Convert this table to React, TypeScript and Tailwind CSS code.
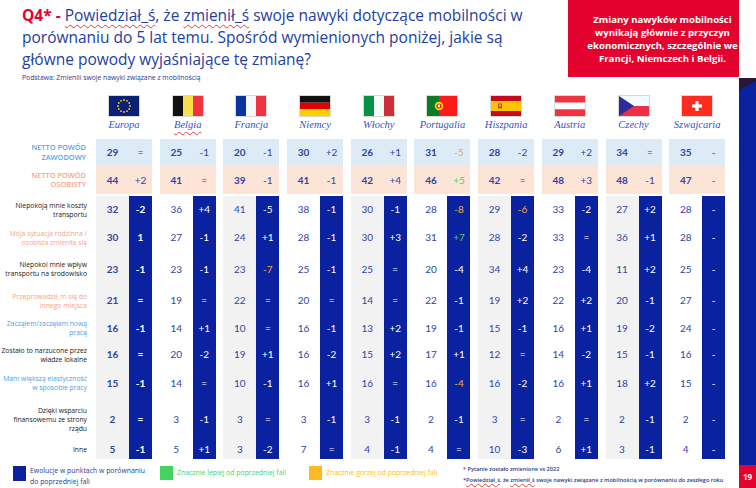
import React from "react";

type Cell = [string, string, ("o" | "g")?];

interface RowDef {
  label: string;
  labelCls: string;
  h: string;
  cells: Cell[];
}

const valueCls = "text-[#2e44a8]";
const deltaColor = { o: "text-[#f2a93b]", g: "text-[#4fd060]" };

function EuFlag() {
  const stars = Array.from({ length: 12 }, (_, i) => {
    const a = (i * Math.PI) / 6;
    return <circle key={i} cx={15 + 6 * Math.cos(a)} cy={10 + 6 * Math.sin(a)} r={0.9} fill="#ffcc00" />;
  });
  return (
    <svg width="30" height="20" viewBox="0 0 30 20">
      <rect width="30" height="20" fill="#0a1f78" />
      {stars}
    </svg>
  );
}

function Tri({ a, b, c, vertical = true }: { a: string; b: string; c: string; vertical?: boolean }) {
  return (
    <svg width="30" height="20" viewBox="0 0 30 20">
      {vertical ? (
        <>
          <rect x="0" width="10" height="20" fill={a} />
          <rect x="10" width="10" height="20" fill={b} />
          <rect x="20" width="10" height="20" fill={c} />
        </>
      ) : (
        <>
          <rect y="0" width="30" height="6.7" fill={a} />
          <rect y="6.7" width="30" height="6.6" fill={b} />
          <rect y="13.3" width="30" height="6.7" fill={c} />
        </>
      )}
    </svg>
  );
}

function PtFlag() {
  return (
    <svg width="30" height="20" viewBox="0 0 30 20">
      <rect width="30" height="20" fill="#ff1a1a" />
      <rect width="12" height="20" fill="#0b7a2a" />
      <circle cx="12" cy="10" r="4.2" fill="#ffe000" />
      <circle cx="12" cy="10" r="2.6" fill="#ff2020" />
      <rect x="11" y="8.6" width="2" height="2.6" fill="#fff" />
    </svg>
  );
}

function EsFlag() {
  return (
    <svg width="30" height="20" viewBox="0 0 30 20">
      <rect width="30" height="20" fill="#c60b1e" />
      <rect y="5" width="30" height="10" fill="#ffc400" />
      <rect x="7" y="7.5" width="4" height="5" fill="#c8463a" />
      <rect x="8" y="8.5" width="2" height="2" fill="#e8b020" />
    </svg>
  );
}

function CzFlag() {
  return (
    <svg width="30" height="20" viewBox="0 0 30 20">
      <rect width="30" height="10" fill="#f2fbff" />
      <rect y="10" width="30" height="10" fill="#ee2e45" />
      <polygon points="0,0 15,10 0,20" fill="#2e2a9a" />
    </svg>
  );
}

function ChFlag() {
  return (
    <svg width="30" height="20" viewBox="0 0 30 20">
      <rect width="30" height="20" fill="#ff2b1f" />
      <rect x="13.4" y="5" width="3.2" height="10" fill="#fff" />
      <rect x="10" y="8.4" width="10" height="3.2" fill="#fff" />
    </svg>
  );
}

const countries: { name: string; flag: React.ReactNode; wavy?: boolean }[] = [
  { name: "Europa", flag: <EuFlag /> },
  { name: "Belgia", flag: <Tri a="#111" b="#f9e04a" c="#ef3340" />, wavy: true },
  { name: "Francja", flag: <Tri a="#0a34a0" b="#f4f8ff" c="#ef3344" /> },
  { name: "Niemcy", flag: <Tri a="#111" b="#e00000" c="#ffce00" vertical={false} /> },
  { name: "Włochy", flag: <Tri a="#069247" b="#f4fff8" c="#cd2e3a" /> },
  { name: "Portugalia", flag: <PtFlag /> },
  { name: "Hiszpania", flag: <EsFlag /> },
  { name: "Austria", flag: <Tri a="#ef3340" b="#fff" c="#ef3340" vertical={false} /> },
  { name: "Czechy", flag: <CzFlag /> },
  { name: "Szwajcaria", flag: <ChFlag /> },
];

const netto: { label: string; labelCls: string; bg: string; cells: Cell[] }[] = [
  {
    label: "NETTO POWÓD\nZAWODOWY",
    labelCls: "text-[#5aa2e8]",
    bg: "bg-[#ddebf7]",
    cells: [["29", "="], ["25", "-1"], ["20", "-1"], ["30", "+2"], ["26", "+1"], ["31", "-5", "o"], ["28", "-2"], ["29", "+2"], ["34", "="], ["35", "-"]],
  },
  {
    label: "NETTO POWÓD\nOSOBISTY",
    labelCls: "text-[#f6a57f]",
    bg: "bg-[#fce4d6]",
    cells: [["44", "+2"], ["41", "="], ["39", "-1"], ["41", "-1"], ["42", "+4"], ["46", "+5", "g"], ["42", "="], ["48", "+3"], ["48", "-1"], ["47", "-"]],
  },
];

const black = "text-[#1a1a1a]";
const peach = "text-[#f6a57f]";
const sky = "text-[#4d9fe6]";

const rows: RowDef[] = [
  { label: "Niepokoją mnie koszty\ntransportu", labelCls: black, h: "h-[27px]",
    cells: [["32", "-2"], ["36", "+4"], ["41", "-5"], ["38", "-1"], ["30", "-1"], ["28", "-8", "o"], ["29", "-6", "o"], ["33", "-2"], ["27", "+2"], ["28", "-"]] },
  { label: "Moja sytuacja rodzinna /\nosobista zmieniła się", labelCls: peach, h: "h-[29px]",
    cells: [["30", "1"], ["27", "-1"], ["24", "+1"], ["28", "-1"], ["30", "+3"], ["31", "+7", "g"], ["28", "-2"], ["33", "="], ["36", "+1"], ["28", "-"]] },
  { label: "Niepokoi mnie wpływ\ntransportu na środowisko", labelCls: black, h: "h-[34px]",
    cells: [["23", "-1"], ["23", "-1"], ["23", "-7", "o"], ["25", "-1"], ["25", "="], ["20", "-4"], ["34", "+4"], ["23", "-4"], ["11", "+2"], ["25", "-"]] },
  { label: "Przeprowadził_m się do\ninnego miejsca", labelCls: peach, h: "h-[29px]",
    cells: [["21", "="], ["19", "="], ["22", "="], ["20", "="], ["14", "="], ["22", "-1"], ["19", "+2"], ["22", "+2"], ["20", "-1"], ["27", "-"]] },
  { label: "Zacząłem/zaczęłam nową\npracę", labelCls: sky, h: "h-[26px]",
    cells: [["16", "-1"], ["14", "+1"], ["10", "="], ["16", "-1"], ["13", "+2"], ["19", "-1"], ["15", "-1"], ["16", "+1"], ["19", "-2"], ["24", "-"]] },
  { label: "Zostało to narzucone przez\nwładze lokalne", labelCls: black, h: "h-[27px]",
    cells: [["16", "="], ["20", "-2"], ["19", "+1"], ["16", "-2"], ["15", "+2"], ["17", "+1"], ["12", "="], ["14", "-2"], ["15", "-1"], ["16", "-"]] },
  { label: "Mam większą elastyczność\nw sposobie pracy", labelCls: sky, h: "h-[30px]",
    cells: [["15", "-1"], ["14", "="], ["10", "-1"], ["16", "+1"], ["16", "="], ["16", "-4", "o"], ["16", "-2"], ["16", "+1"], ["18", "+2"], ["15", "-"]] },
  { label: "Dzięki wsparciu\nfinansowemu ze strony\nrządu", labelCls: black, h: "h-[42px]",
    cells: [["2", "="], ["3", "-1"], ["3", "="], ["3", "-1"], ["3", "-1"], ["2", "-1"], ["3", "="], ["2", "="], ["2", "-1"], ["2", "-"]] },
  { label: "Inne", labelCls: black, h: "h-[19px]",
    cells: [["5", "-1"], ["5", "+1"], ["3", "-2"], ["7", "="], ["4", "-1"], ["4", "="], ["10", "-3"], ["6", "+1"], ["3", "-1"], ["4", "-"]] },
];

const wavy = "underline decoration-wavy decoration-[#e0403a] decoration-1 underline-offset-[3px]";
const wavySmall = "underline decoration-wavy decoration-[#e0403a] decoration-[0.5px] underline-offset-[1px]";

export default function App() {
  return (
    <div className="flex h-[488px] w-[756px] overflow-hidden bg-white font-['Open_Sans',sans-serif]">
      <div className="flex w-[739px] flex-col">
        {/* header */}
        <div className="flex h-[86px]">
          <div className="flex-1 pl-[22px] pt-[4px]">
            <p className="text-[15.5px] leading-[22px] text-[#2340a0]">
              <span className="font-bold text-[#e4032e]">Q4* - </span>
              <span className={wavy}>Powiedział_ś</span>, że <span className={wavy}>zmienił_ś</span> swoje nawyki dotyczące mobilności w
              <br />
              porównaniu do 5 lat temu. Spośród wymienionych poniżej, jakie są
              <br />
              główne powody wyjaśniające tę zmianę?
            </p>
            <p className="mt-[3px] text-[6.8px] leading-[10px] text-[#27408f]">Podstawa: Zmienili swoje nawyki związane z mobilnością</p>
          </div>
          <div className="flex h-[77px] w-[171px] shrink-0 items-center justify-center bg-[#e4032e] pl-[18px] text-center text-[9.6px] font-bold leading-[13px] text-white">
            <p>
              Zmiany nawyków mobilności
              <br />
              wynikają głównie z przyczyn
              <br />
              ekonomicznych, szczególnie we
              <br />
              Francji, Niemczech i Belgii.
            </p>
          </div>
        </div>

        {/* flags */}
        <div className="flex h-[53px]">
          <div className="w-[96px] shrink-0" />
          <div className="flex gap-[7.7px]">
            {countries.map((c) => (
              <div key={c.name} className="flex w-[56px] flex-col items-center pt-[10px]">
                <div className="outline outline-1 outline-[#d8d8d8]">{c.flag}</div>
                <span
                  className={`mt-[2px] font-['Liberation_Serif',serif] text-[10.5px] italic leading-[14px] text-[#3552c4] ${c.wavy ? wavy : ""}`}
                >
                  {c.name}
                </span>
              </div>
            ))}
          </div>
        </div>

        {/* netto rows */}
        {netto.map((r, ri) => (
          <div key={r.label} className={`flex ${ri === 0 ? "h-[27px]" : "h-[28px]"}`}>
            <div
              className={`flex w-[96px] shrink-0 items-center justify-end whitespace-pre pr-[10px] text-right text-[7.4px] font-semibold leading-[9.5px] ${r.labelCls}`}
            >
              {r.label}
            </div>
            <div className="flex gap-[7.7px] font-['Lato',sans-serif] text-[10px]">
              {r.cells.map((c, i) => (
                <div key={i} className={`flex w-[56px] ${r.bg}`}>
                  <div className={`flex w-[33px] items-center justify-center font-bold ${valueCls}`}>{c[0]}</div>
                  <div className={`flex w-[23px] items-center justify-center ${c[2] ? deltaColor[c[2]] : valueCls}`}>{c[1]}</div>
                </div>
              ))}
            </div>
          </div>
        ))}

        <div className="h-[2px]" />

        {/* data rows */}
        {rows.map((r) => (
          <div key={r.label} className={`flex ${r.h}`}>
            <div
              className={`flex w-[96px] shrink-0 items-center justify-end whitespace-pre pr-[9px] text-right text-[6.8px] leading-[9px] ${r.labelCls}`}
            >
              {r.label}
            </div>
            <div className="flex gap-[7.7px] font-['Lato',sans-serif] text-[10px]">
              {r.cells.map((c, i) => (
                <div key={i} className="flex w-[56px]">
                  <div
                    className={`flex w-[33px] items-center justify-center ${i % 2 === 0 ? "bg-[#f2f2f2]" : "bg-white"} ${i === 0 ? "font-bold" : ""} ${valueCls}`}
                  >
                    {c[0]}
                  </div>
                  <div
                    className={`flex w-[23px] items-center justify-center bg-[#0a22a0] ${i === 0 ? "font-bold" : ""} ${c[2] ? deltaColor[c[2]] : "text-white"}`}
                  >
                    {c[1]}
                  </div>
                </div>
              ))}
            </div>
          </div>
        ))}

        {/* footer */}
        <div className="flex flex-1 pt-[7px] text-[6.9px] leading-[10.5px]">
          <div className="flex w-[160px] shrink-0 gap-[4px] pl-[13px]">
            <div className="h-[15px] w-[13px] shrink-0 bg-[#0a22a0]" />
            <p className="text-[#27408f]">
              Ewolucje w punktach w porównaniu
              <br />
              do poprzedniej fali
            </p>
          </div>
          <div className="flex w-[149px] shrink-0 items-start gap-[4px]">
            <div className="h-[14px] w-[13px] shrink-0 bg-[#44d45c]" />
            <p className="pt-[2px] text-[#4fd060]">Znacznie lepiej od poprzedniej fali</p>
          </div>
          <div className="flex w-[154px] shrink-0 items-start gap-[4px]">
            <div className="h-[14px] w-[13px] shrink-0 bg-[#ffb81f]" />
            <p className="pt-[2px] text-[#ffb81f]">Znacznie gorzej od poprzedniej fali</p>
          </div>
          <div className="-mt-[2px] flex-1 text-[5.6px] font-semibold leading-[11px] text-[#27408f]">
            <p>
              <span className="text-[#e4032e]">*</span> Pytanie zostało zmienione vs 2022
            </p>
            <p>
              *<span className={wavySmall}>Powiedział_ś</span>, że <span className={wavySmall}>zmienił_ś</span> swoje nawyki związane z mobilnością w porównaniu do zeszłego roku
            </p>
          </div>
        </div>
      </div>

      {/* right edge strip */}
      <div className="flex w-[17px] flex-col">
        <div className="h-[78px] bg-white" />
        <svg width="17" height="14" viewBox="0 0 17 14" className="block">
          <rect width="17" height="14" fill="#0a22a0" />
          <polygon points="0,0 17,0 17,3 0,12" fill="#2a1636" />
        </svg>
        <div className="flex-1 bg-[#0a22a0]" />
        <div className="flex h-[23px] items-center justify-center bg-[#e4032e] text-[8px] font-bold text-white">19</div>
      </div>
    </div>
  );
}
